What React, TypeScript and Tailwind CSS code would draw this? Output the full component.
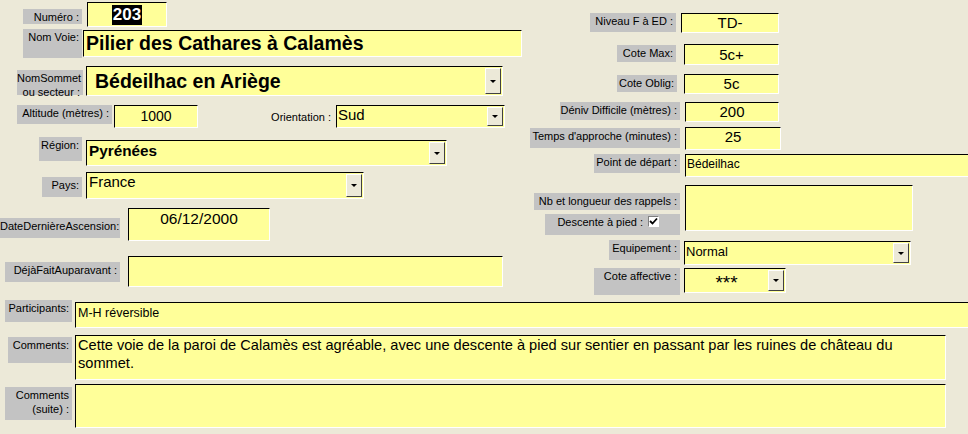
import type { ReactNode } from "react";
import clsx from "clsx";

// MS Access style climbing route form

const Lbl = ({ className, children }: { className?: string; children: ReactNode }) => (
  <div
    className={clsx(
      "shrink-0 bg-[#c3c3c3] pr-[3px] pt-px text-right text-[11px] leading-[14px] text-black",
      className
    )}
  >
    {children}
  </div>
);

const DropBtn = () => (
  <div className="my-px mr-px flex w-[16px] shrink-0 items-center justify-center border border-t-[#ffffff] border-l-[#ffffff] border-b-[#404040] border-r-[#404040] bg-[#ece9d8]">
    <div className="h-0 w-0 border-x-[3px] border-t-[3px] border-x-transparent border-t-black" />
  </div>
);

const Fld = ({
  className,
  textClass,
  children,
  drop,
}: {
  className?: string;
  textClass?: string;
  children?: ReactNode;
  drop?: boolean;
}) => (
  <div
    className={clsx(
      "flex shrink-0 border border-t-black border-l-black border-b-white border-r-white bg-[#ffff99] text-black",
      className
    )}
  >
    <div className={clsx("min-w-0 flex-1 overflow-hidden whitespace-nowrap", textClass)}>{children}</div>
    {drop && <DropBtn />}
  </div>
);

export default function App() {
  return (
    <div className="h-[434px] w-[968px] overflow-hidden bg-[#ece9d8] font-['Liberation_Sans',Arial,sans-serif]">
      <div className="flex h-[295px]">
        {/* left column */}
        <div className="w-[525px] shrink-0">
          <div className="mt-[2px] flex items-start">
            <Lbl className="ml-[23px] mt-[7px] h-[15px] w-[59px]">Numéro :</Lbl>
            <Fld className="ml-[5px] h-[25px] w-[80px]" textClass="flex items-center justify-center">
              <span className="bg-black px-px text-[17px] font-bold leading-[20px] text-white">203</span>
            </Fld>
          </div>

          <div className="mt-[2px] flex items-start">
            <Lbl className="ml-[23px] h-[29px] w-[59px] pt-[2px]">Nom Voie:</Lbl>
            <Fld className="ml-px mt-px h-[27px] w-[439px]" textClass="pl-[2px] text-[19.5px] font-bold leading-[25px]">
              Pilier des Cathares à Calamès
            </Fld>
          </div>

          <div className="mt-[8px] flex items-start">
            <Lbl className="ml-[17px] mt-[4px] h-[25px] w-[66px] pt-0 leading-[12px]">
              NomSommet
              <br />
              ou secteur :
            </Lbl>
            <Fld className="ml-[3px] h-[30px] w-[417px]" drop textClass="pl-[8px] text-[19.5px] font-bold leading-[28px]">
              Bédeilhac en Ariège
            </Fld>
          </div>

          <div className="mt-[9px] flex items-start">
            <Lbl className="ml-[17px] h-[19px] w-[95px] pt-[2px]">Altitude (mètres) :</Lbl>
            <Fld className="ml-[2px] h-[23px] w-[84px]" textClass="text-center text-[14px] leading-[21px]">
              1000
            </Fld>
            <div className="ml-[69px] mt-[5px] w-[64px] shrink-0 text-right text-[11px] leading-[14px]">Orientation :</div>
            <Fld className="ml-[5px] h-[23px] w-[169px]" drop textClass="pl-px text-[15px] leading-[18px]">
              Sud
            </Fld>
          </div>

          <div className="mt-[9px] flex items-start">
            <Lbl className="ml-[39px] h-[24px] w-[43px] pt-[2px]">Région:</Lbl>
            <Fld className="ml-[4px] mt-[3px] h-[26px] w-[361px]" drop textClass="pl-[2px] text-[15.3px] font-bold leading-[19px]">
              Pyrénées
            </Fld>
          </div>

          <div className="mt-[6px] flex items-start">
            <Lbl className="ml-[42px] mt-[5px] h-[20px] w-[40px] pt-[2px]">Pays:</Lbl>
            <Fld className="ml-[4px] h-[27px] w-[278px]" drop textClass="pl-[2px] text-[15px] leading-[18px]">
              France
            </Fld>
          </div>

          <div className="mt-[9px] flex items-start">
            <Lbl className="mt-[10px] h-[20px] w-[120px] pt-[3px]">DateDernièreAscension:</Lbl>
            <Fld className="ml-[8px] h-[33px] w-[142px]" textClass="text-center text-[15.5px] leading-[20px]">
              06/12/2000
            </Fld>
          </div>

          <div className="mt-[15px] flex items-start">
            <Lbl className="ml-[5px] mt-[6px] h-[20px] w-[115px] pt-[3px]">DéjàFaitAuparavant :</Lbl>
            <Fld className="ml-[8px] h-[31px] w-[375px]" />
          </div>
        </div>

        {/* right column */}
        <div className="min-w-0 flex-1 overflow-hidden">
          <div className="mt-[13px] flex items-start">
            <Lbl className="ml-[65px] h-[19px] w-[86px] pt-[2px]">Niveau F à ED :</Lbl>
            <Fld className="ml-[5px] h-[20px] w-[98px]" textClass="text-center text-[15px] leading-[18px]">
              TD-
            </Fld>
          </div>

          <div className="mt-[11px] flex items-start">
            <Lbl className="ml-[92px] mt-px h-[17px] w-[59px]">Cote Max:</Lbl>
            <Fld className="ml-[8px] h-[21px] w-[95px]" textClass="text-center text-[15px] leading-[19px]">
              5c+
            </Fld>
          </div>

          <div className="mt-[9px] flex items-start">
            <Lbl className="ml-[92px] mt-px h-[17px] w-[60px]">Cote Oblig:</Lbl>
            <Fld className="ml-[7px] h-[20px] w-[95px]" textClass="text-center text-[15px] leading-[18px]">
              5c
            </Fld>
          </div>

          <div className="mt-[8px] flex items-start">
            <Lbl className="ml-[35px] h-[18px] w-[120px]">Déniv Difficile (mètres) :</Lbl>
            <Fld className="ml-[5px] h-[20px] w-[94px]" textClass="text-center text-[15px] leading-[18px]">
              200
            </Fld>
          </div>

          <div className="mt-[5px] flex items-start">
            <Lbl className="ml-[5px] mt-px h-[20px] w-[150px] pt-[2px]">Temps d'approche (minutes) :</Lbl>
            <Fld className="ml-[5px] h-[23px] w-[96px]" textClass="text-center text-[15px] leading-[18px]">
              25
            </Fld>
          </div>

          <div className="mt-[4px] flex items-start">
            <Lbl className="ml-[69px] h-[19px] w-[86px] pt-[2px]">Point de départ :</Lbl>
            <Fld className="ml-[5px] h-[23px] w-[300px]" textClass="pl-px text-[12px] leading-[18px]">
              Bédeilhac
            </Fld>
          </div>

          <div className="mt-[8px] flex items-start">
            <div className="w-[155px] shrink-0">
              <Lbl className="ml-[9px] mt-[8px] h-[17px] w-[146px]">Nb et longueur des rappels :</Lbl>
              <Lbl className="ml-[20px] mt-[4px] flex h-[21px] w-[135px] items-start justify-end pr-[21px] pt-[2px]">
                <span>Descente à pied :</span>
                <span className="ml-[5px] mt-px flex h-[11px] w-[11px] items-center justify-center border border-t-[#808080] border-l-[#808080] border-b-white border-r-white bg-white">
                  <svg width="9" height="9" viewBox="0 0 9 9">
                    <path d="M1 4 L3.5 6.5 L8 1.5" fill="none" stroke="black" strokeWidth="1.8" />
                  </svg>
                </span>
              </Lbl>
            </div>
            <Fld className="ml-[5px] h-[46px] w-[228px]" />
          </div>

          <div className="mt-[5px] flex items-start">
            <Lbl className="ml-[84px] h-[20px] w-[71px] pt-[2px]">Equipement :</Lbl>
            <Fld className="ml-[4px] mt-px h-[24px] w-[227px]" drop textClass="pl-px text-[13px] leading-[20px]">
              Normal
            </Fld>
          </div>

          <div className="mt-[3px] flex items-start">
            <Lbl className="ml-[69px] h-[27px] w-[86px] pt-[2px]">Cote affective :</Lbl>
            <Fld className="ml-[4px] h-[25px] w-[102px]" drop textClass="pt-[4px] text-center text-[19px] leading-[19px]">
              ***
            </Fld>
          </div>
        </div>
      </div>

      {/* bottom rows */}
      <div className="mt-[5px] flex items-start">
        <Lbl className="ml-[5px] h-[22px] w-[67px] pt-[2px]">Participants:</Lbl>
        <Fld className="ml-[3px] mt-[2px] h-[26px] w-[900px]" textClass="pl-[2px] text-[12.5px] leading-[20px]">
          M-H réversible
        </Fld>
      </div>

      <div className="mt-[7px] flex items-start">
        <Lbl className="ml-[8px] mt-[2px] h-[26px] w-[64px] pt-[2px]">Comments:</Lbl>
        <Fld className="ml-[3px] h-[45px] w-[871px]" textClass="pl-[2px] text-[14.6px] leading-[18px]">
          Cette voie de la paroi de Calamès est agréable, avec une descente à pied sur sentier en passant par les ruines de château du
          <br />
          sommet.
        </Fld>
      </div>

      <div className="mt-[4px] flex items-start">
        <Lbl className="ml-[5px] mt-[3px] h-[33px] w-[67px] leading-[13px]">
          Comments
          <br />
          (suite) :
        </Lbl>
        <Fld className="ml-[3px] h-[44px] w-[871px]" />
      </div>
    </div>
  );
}
